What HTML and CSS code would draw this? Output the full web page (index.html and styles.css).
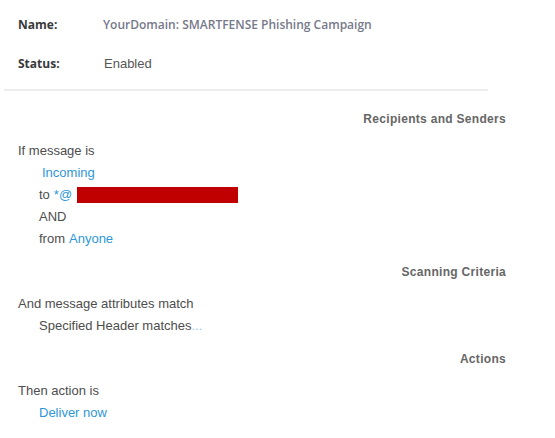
FILE: index.html
```html
<!DOCTYPE html>
<html>

<head>
    <meta charset="UTF-8">
    <meta name="viewport" content="width=device-width">
    <title>Content Filter</title>
    <link rel="stylesheet" href="styles.css">
</head>

<body>
    <div class="summary">
        <div class="field">
            <span class="label">Name:</span>
            <span class="value name">YourDomain: SMARTFENSE Phishing Campaign</span>
        </div>
        <div class="field">
            <span class="label">Status:</span>
            <span class="value status">Enabled</span>
        </div>
    </div>
    <div class="divider"></div>

    <section class="rule">
        <h2>Recipients and Senders</h2>
        <p>If message is</p>
        <p class="indent"><a class="link incoming">Incoming</a></p>
        <p class="indent">to <a class="link after">*@</a><span class="redacted"></span></p>
        <p class="indent">AND</p>
        <p class="indent">from <a class="link after">Anyone</a></p>

        <h2>Scanning Criteria</h2>
        <p>And message attributes match</p>
        <p class="indent">Specified Header matches<span class="more">...</span></p>

        <h2>Actions</h2>
        <p>Then action is</p>
        <p class="indent"><a class="link">Deliver now</a></p>
    </section>
</body>

</html>
```

FILE: styles.css
```css
* {
    box-sizing: border-box;
}

body {
    margin: 0;
    background: #fff;
    font-family: "Liberation Sans", Arial, sans-serif;
    font-size: 13px;
    color: #4d4d4d;
}

/*********************/
/* En-tete : nom et statut */
/*********************/
.summary {
    display: flex;
    flex-direction: column;
    gap: 17px;
    padding: 13px 0 0 18px;
}

.field {
    display: flex;
    align-items: center;
    height: 22px;
}

.label {
    width: 85px;
    font-family: "Open Sans", sans-serif;
    font-weight: 700;
    font-size: 12px;
    color: #3a3a3a;
}

.name {
    font-family: "Open Sans", sans-serif;
    font-weight: 600;
    font-size: 12px;
    color: #76798a;
}

.status {
    color: #555;
    margin-left: 1px;
}

.divider {
    margin: 15px 0 0 4px;
    width: 484px;
    height: 2px;
    background: #ececec;
}

/*********************/
/* Les regles */
/*********************/
.rule {
    width: 506px;
    padding: 17px 0 0 18px;
}

.rule h2 {
    margin: 11px 0 10px;
    line-height: 22px;
    font-size: 12px;
    letter-spacing: 0.3px;
    font-weight: 700;
    color: #666;
    text-align: right;
}

.rule h2:first-child {
    margin-top: 0;
}

.rule p {
    margin: 0;
    line-height: 22px;
    display: flex;
    align-items: center;
}

.rule p.indent {
    padding-left: 21px;
}

.link {
    color: #2e97d8;
}

.link.after {
    margin-left: 4px;
}

.incoming {
    margin-left: 3px;
}

.redacted {
    display: inline-block;
    width: 161px;
    height: 16px;
    margin-left: 5px;
    background: #c00000;
}

.more {
    color: #9cc8e6;
}
```
